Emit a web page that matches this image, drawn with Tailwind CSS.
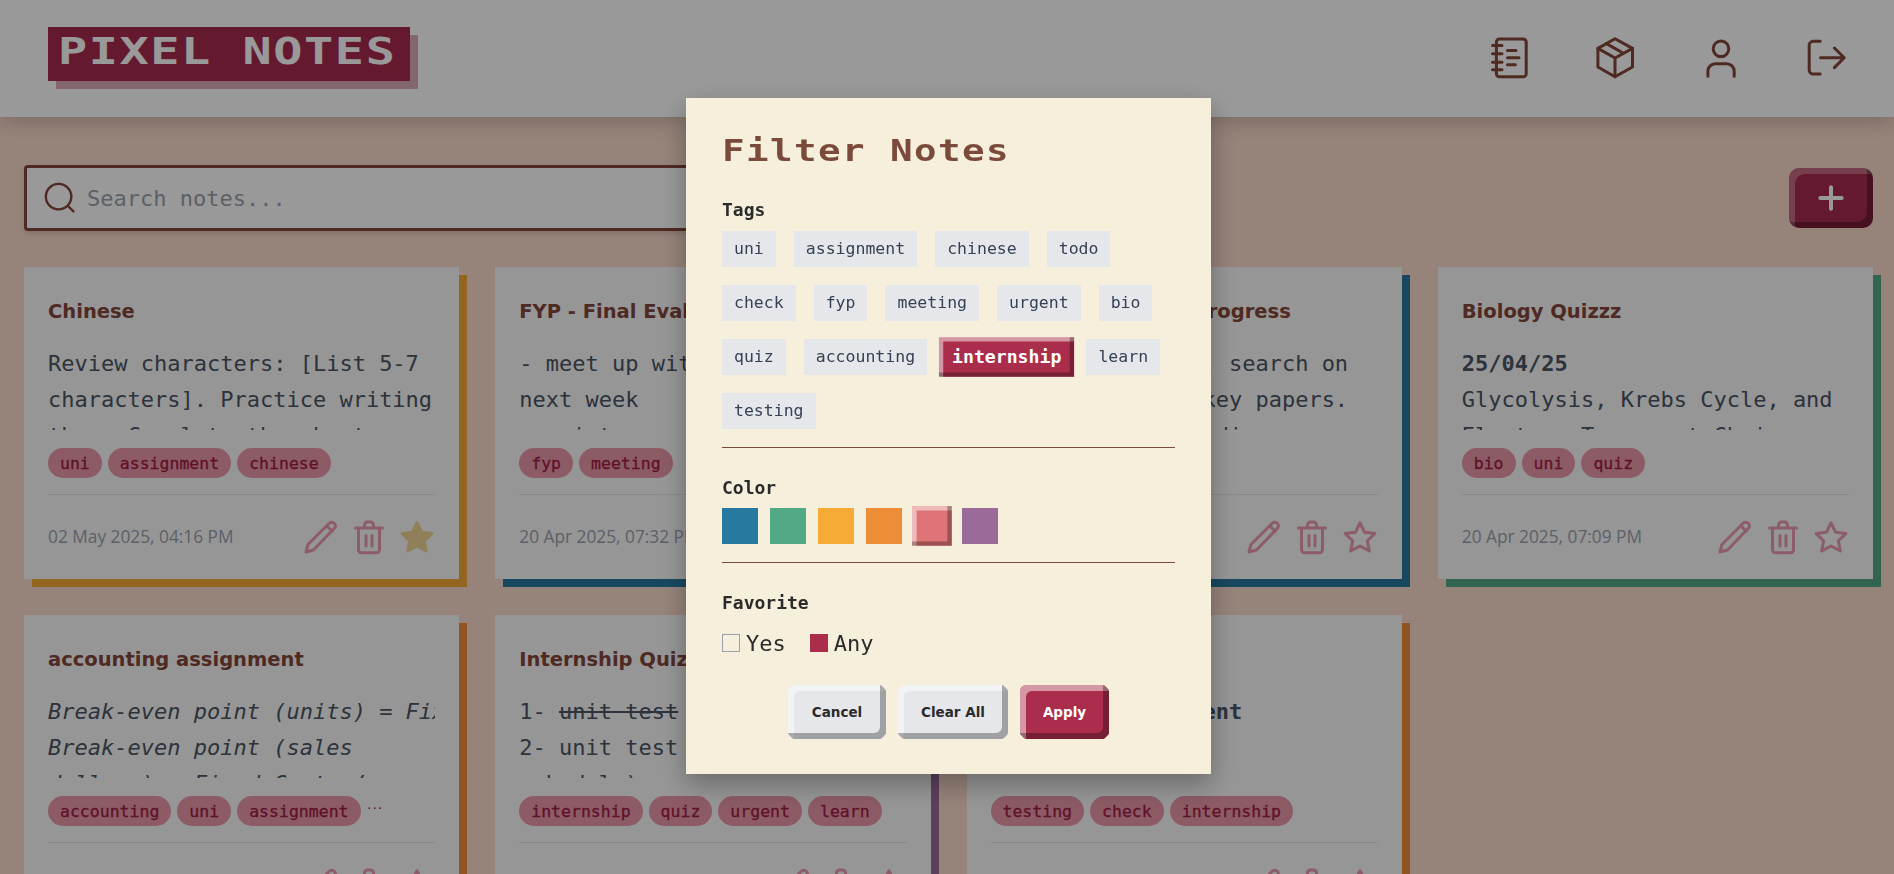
<!DOCTYPE html>
<html lang="en">
<head>
    <meta charset="UTF-8">
    <meta name="viewport" content="width=device-width, initial-scale=1.0">
    <title>Pixel Notes</title>
    <script src="https://cdn.jsdelivr.net/npm/@tailwindcss/browser@4"></script>
</head>
<body class="h-screen overflow-hidden bg-[#fadbcc] font-['DejaVu_Sans_Mono',monospace] text-gray-600">

    <!-- header -->
    <header class="h-[117px] bg-white flex items-start justify-between pt-[27px] pl-12 pr-[44px] shadow-[0_4px_20px_rgba(0,0,0,0.2)]">
        <h1 class="w-[362px] h-[54px] flex items-center pl-[10px] pb-[6px] bg-[#a92a4d] text-white font-bold text-[38px] tracking-[1.25px] whitespace-nowrap shadow-[8px_8px_0_rgba(169,42,77,0.4)]"><span class="inline-block origin-left scale-x-[1.275]">PIXEL NOTES</span></h1>
        <nav class="flex items-center gap-[57.5px] mt-[6.5px] text-[#84463a]">
            <svg class="w-12 h-12" viewBox="0 0 24 24" fill="none" stroke="currentColor" stroke-width="1.5" stroke-linecap="round" stroke-linejoin="round"><path d="M6.7 2.5H18.6a1.5 1.5 0 0 1 1.5 1.5V19.9a1.5 1.5 0 0 1-1.5 1.5H6.7a1.5 1.5 0 0 1-1.5-1.5V4a1.5 1.5 0 0 1 1.5-1.5z"/><path d="M3.25 5.75H8M3.25 9.9H8M3.25 14.1H8M3.25 17.9H8M10.75 8.25H15M10.75 11.9H16.5M10.75 15.4H14.7"/></svg>
            <svg class="w-12 h-12" viewBox="0 0 24 24" fill="none" stroke="currentColor" stroke-width="1.5" stroke-linecap="round" stroke-linejoin="round"><path d="M12 2.35L20.75 7.2V16.5L12 21.35L3.45 16.5V7.2z"/><path d="M3.45 7.2L12 12L20.75 7.2M12 12V21.35M7.7 4.8L16.2 9.6"/></svg>
            <svg class="w-12 h-12" viewBox="0 0 24 24" fill="none" stroke="currentColor" stroke-width="1.5" stroke-linecap="round" stroke-linejoin="round"><circle cx="12" cy="7.4" r="3.9"/><path d="M5.45 21.1v-2.5a3.75 3.75 0 0 1 3.75-3.75h5.65a3.75 3.75 0 0 1 3.75 3.75v2.5"/></svg>
            <svg class="w-12 h-12" viewBox="0 0 24 24" fill="none" stroke="currentColor" stroke-width="1.5" stroke-linecap="round" stroke-linejoin="round"><path d="M9.1 3.65H5.6a2 2 0 0 0-2 2v12.35a2 2 0 0 0 2 2h3.5M9.25 11.9H21.1M16.2 7l4.9 4.9-4.9 4.9"/></svg>
        </nav>
    </header>

    <main class="pl-6 pr-[21px]">
        <!-- search + add -->
        <div class="flex items-center justify-between h-[66px] mt-12">
            <div class="w-[1100px] h-[66px] flex items-center gap-[10px] pl-4 bg-white border-[3px] border-[#84463a] rounded-[4px] shadow-md">
                <svg class="w-[34px] h-[34px] shrink-0 text-[#84463a]" viewBox="0 0 24 24" fill="none" stroke="currentColor" stroke-width="1.7" stroke-linecap="round"><circle cx="11" cy="11" r="9"/><path d="M18 18l3.5 3.5"/></svg>
                <span class="text-[22px] text-gray-400">Search notes...</span>
            </div>
            <button class="w-[84px] h-[60px] flex items-center justify-center rounded-[10px] bg-[#a92a4d] text-white shadow-[inset_-6px_-6px_0_rgba(0,0,0,0.3),inset_6px_6px_0_rgba(255,255,255,0.3)]">
                <svg class="w-8 h-8" viewBox="0 0 24 24" fill="none" stroke="currentColor" stroke-width="3" stroke-linecap="round"><path d="M12 4v16M4 12h16"/></svg>
            </button>
        </div>

        <!-- notes -->
        <section class="grid grid-cols-4 gap-9 mt-9">

            <article class="h-[312px] bg-[#fafafa] p-6 flex flex-col shadow-[8px_8px_0_#f5ab35]">
                <h2 class="h-[42px] font-['DejaVu_Sans',sans-serif] font-bold text-[19.5px] leading-[42px] text-[#84463a]">Chinese</h2>
                <div class="h-[84px] mt-[13px] overflow-hidden text-[22px] leading-[36px]">Review characters: [List 5-7 characters]. Practice writing them. Complete the chapter review</div>
                <div class="flex items-center gap-[6px] mt-[18px]">
                    <span class="h-[30px] px-3 rounded-full bg-[#e998aa] text-[#a01c42] text-[16.5px] [-webkit-text-stroke:0.3px] leading-[31px]">uni</span>
                    <span class="h-[30px] px-3 rounded-full bg-[#e998aa] text-[#a01c42] text-[16.5px] [-webkit-text-stroke:0.3px] leading-[31px]">assignment</span>
                    <span class="h-[30px] px-3 rounded-full bg-[#e998aa] text-[#a01c42] text-[16.5px] [-webkit-text-stroke:0.3px] leading-[31px]">chinese</span>
                </div>
                <div class="flex items-center justify-between mt-4 pt-6 border-t border-gray-200">
                    <span class="font-['Open_Sans',sans-serif] text-[17.3px] text-gray-400">02 May 2025, 04:16 PM</span>
                    <div class="flex items-center gap-3 text-[#ea9cae]">
                        <svg class="w-9 h-9" viewBox="0 0 24 24" fill="none" stroke="currentColor" stroke-width="2" stroke-linecap="round" stroke-linejoin="round"><path d="M2 22l1.3-5L17.5 2.8a2.4 2.4 0 0 1 3.4 0a2.4 2.4 0 0 1 0 3.4L7 20.7z"/><path d="M15.8 4.5l3.7 3.7"/></svg>
                        <svg class="w-9 h-9" viewBox="0 0 24 24" fill="none" stroke="currentColor" stroke-width="2" stroke-linecap="round" stroke-linejoin="round"><path d="M3 6h18M9 6V4a2 2 0 0 1 2-2h2a2 2 0 0 1 2 2v2M5 6v14.5a2 2 0 0 0 2 2h10a2 2 0 0 0 2-2V6M10 11v7M14 11v7"/></svg>
                        <svg class="w-9 h-9 text-[#efd596]" viewBox="0 0 24 24" fill="currentColor" stroke="currentColor" stroke-width="2" stroke-linejoin="round"><path d="M12 2.5l3 6.3 6.9.9-5 4.8 1.3 6.8-6.2-3.3-6.2 3.3 1.3-6.8-5-4.8 6.9-.9z"/></svg>
                    </div>
                </div>
            </article>

            <article class="h-[312px] bg-[#fafafa] p-6 flex flex-col shadow-[8px_8px_0_#2779a0]">
                <h2 class="h-[42px] font-['DejaVu_Sans',sans-serif] font-bold text-[19.5px] leading-[42px] text-[#84463a]">FYP - Final Evaluation</h2>
                <div class="h-[84px] mt-[13px] overflow-hidden text-[22px] leading-[36px]">- meet up with supervisor<br>next week<br>- print report</div>
                <div class="flex items-center gap-[6px] mt-[18px]">
                    <span class="h-[30px] px-3 rounded-full bg-[#e998aa] text-[#a01c42] text-[16.5px] [-webkit-text-stroke:0.3px] leading-[31px]">fyp</span>
                    <span class="h-[30px] px-3 rounded-full bg-[#e998aa] text-[#a01c42] text-[16.5px] [-webkit-text-stroke:0.3px] leading-[31px]">meeting</span>
                </div>
                <div class="flex items-center justify-between mt-4 pt-6 border-t border-gray-200">
                    <span class="font-['Open_Sans',sans-serif] text-[17.3px] text-gray-400">20 Apr 2025, 07:32 PM</span>
                    <div class="flex items-center gap-3 text-[#ea9cae]">
                        <svg class="w-9 h-9" viewBox="0 0 24 24" fill="none" stroke="currentColor" stroke-width="2" stroke-linecap="round" stroke-linejoin="round"><path d="M2 22l1.3-5L17.5 2.8a2.4 2.4 0 0 1 3.4 0a2.4 2.4 0 0 1 0 3.4L7 20.7z"/><path d="M15.8 4.5l3.7 3.7"/></svg>
                        <svg class="w-9 h-9" viewBox="0 0 24 24" fill="none" stroke="currentColor" stroke-width="2" stroke-linecap="round" stroke-linejoin="round"><path d="M3 6h18M9 6V4a2 2 0 0 1 2-2h2a2 2 0 0 1 2 2v2M5 6v14.5a2 2 0 0 0 2 2h10a2 2 0 0 0 2-2V6M10 11v7M14 11v7"/></svg>
                        <svg class="w-9 h-9" viewBox="0 0 24 24" fill="none" stroke="currentColor" stroke-width="2" stroke-linejoin="round"><path d="M12 2.5l3 6.3 6.9.9-5 4.8 1.3 6.8-6.2-3.3-6.2 3.3 1.3-6.8-5-4.8 6.9-.9z"/></svg>
                    </div>
                </div>
            </article>

            <article class="h-[312px] bg-[#fafafa] p-6 flex flex-col shadow-[8px_8px_0_#2779a0]">
                <h2 class="h-[42px] font-['DejaVu_Sans',sans-serif] font-bold text-[19.5px] leading-[42px] whitespace-nowrap text-[#84463a]">Literature Review Progress</h2>
                <div class="h-[84px] mt-[13px] overflow-hidden text-[22px] leading-[36px]">Complete the lit. search on<br>Read and review key papers.<br>Note the main findings</div>
                <div class="flex items-center gap-[6px] mt-[18px]">
                    <span class="h-[30px] px-3 rounded-full bg-[#e998aa] text-[#a01c42] text-[16.5px] [-webkit-text-stroke:0.3px] leading-[31px]">fyp</span>
                    <span class="h-[30px] px-3 rounded-full bg-[#e998aa] text-[#a01c42] text-[16.5px] [-webkit-text-stroke:0.3px] leading-[31px]">meeting</span>
                </div>
                <div class="flex items-center justify-between mt-4 pt-6 border-t border-gray-200">
                    <span class="font-['Open_Sans',sans-serif] text-[17.3px] text-gray-400">20 Apr 2025, 07:20 PM</span>
                    <div class="flex items-center gap-3 text-[#ea9cae]">
                        <svg class="w-9 h-9" viewBox="0 0 24 24" fill="none" stroke="currentColor" stroke-width="2" stroke-linecap="round" stroke-linejoin="round"><path d="M2 22l1.3-5L17.5 2.8a2.4 2.4 0 0 1 3.4 0a2.4 2.4 0 0 1 0 3.4L7 20.7z"/><path d="M15.8 4.5l3.7 3.7"/></svg>
                        <svg class="w-9 h-9" viewBox="0 0 24 24" fill="none" stroke="currentColor" stroke-width="2" stroke-linecap="round" stroke-linejoin="round"><path d="M3 6h18M9 6V4a2 2 0 0 1 2-2h2a2 2 0 0 1 2 2v2M5 6v14.5a2 2 0 0 0 2 2h10a2 2 0 0 0 2-2V6M10 11v7M14 11v7"/></svg>
                        <svg class="w-9 h-9" viewBox="0 0 24 24" fill="none" stroke="currentColor" stroke-width="2" stroke-linejoin="round"><path d="M12 2.5l3 6.3 6.9.9-5 4.8 1.3 6.8-6.2-3.3-6.2 3.3 1.3-6.8-5-4.8 6.9-.9z"/></svg>
                    </div>
                </div>
            </article>

            <article class="h-[312px] bg-[#fafafa] p-6 flex flex-col shadow-[8px_8px_0_#52a985]">
                <h2 class="h-[42px] font-['DejaVu_Sans',sans-serif] font-bold text-[19.5px] leading-[42px] text-[#84463a]">Biology Quizzz</h2>
                <div class="h-[84px] mt-[13px] overflow-hidden text-[22px] leading-[36px]"><b>25/04/25</b><br>Glycolysis, Krebs Cycle, and Electron Transport Chain</div>
                <div class="flex items-center gap-[6px] mt-[18px]">
                    <span class="h-[30px] px-3 rounded-full bg-[#e998aa] text-[#a01c42] text-[16.5px] [-webkit-text-stroke:0.3px] leading-[31px]">bio</span>
                    <span class="h-[30px] px-3 rounded-full bg-[#e998aa] text-[#a01c42] text-[16.5px] [-webkit-text-stroke:0.3px] leading-[31px]">uni</span>
                    <span class="h-[30px] px-3 rounded-full bg-[#e998aa] text-[#a01c42] text-[16.5px] [-webkit-text-stroke:0.3px] leading-[31px]">quiz</span>
                </div>
                <div class="flex items-center justify-between mt-4 pt-6 border-t border-gray-200">
                    <span class="font-['Open_Sans',sans-serif] text-[17.3px] text-gray-400">20 Apr 2025, 07:09 PM</span>
                    <div class="flex items-center gap-3 text-[#ea9cae]">
                        <svg class="w-9 h-9" viewBox="0 0 24 24" fill="none" stroke="currentColor" stroke-width="2" stroke-linecap="round" stroke-linejoin="round"><path d="M2 22l1.3-5L17.5 2.8a2.4 2.4 0 0 1 3.4 0a2.4 2.4 0 0 1 0 3.4L7 20.7z"/><path d="M15.8 4.5l3.7 3.7"/></svg>
                        <svg class="w-9 h-9" viewBox="0 0 24 24" fill="none" stroke="currentColor" stroke-width="2" stroke-linecap="round" stroke-linejoin="round"><path d="M3 6h18M9 6V4a2 2 0 0 1 2-2h2a2 2 0 0 1 2 2v2M5 6v14.5a2 2 0 0 0 2 2h10a2 2 0 0 0 2-2V6M10 11v7M14 11v7"/></svg>
                        <svg class="w-9 h-9" viewBox="0 0 24 24" fill="none" stroke="currentColor" stroke-width="2" stroke-linejoin="round"><path d="M12 2.5l3 6.3 6.9.9-5 4.8 1.3 6.8-6.2-3.3-6.2 3.3 1.3-6.8-5-4.8 6.9-.9z"/></svg>
                    </div>
                </div>
            </article>

            <article class="h-[312px] bg-[#fafafa] p-6 flex flex-col shadow-[8px_8px_0_#ee8d38]">
                <h2 class="h-[42px] font-['DejaVu_Sans',sans-serif] font-bold text-[19.5px] leading-[42px] text-[#84463a]">accounting assignment</h2>
                <div class="h-[84px] mt-[13px] overflow-hidden text-[22px] leading-[36px] italic"><div class="whitespace-nowrap">Break-even point (units) = Fixed</div>Break-even point (sales dollars) = Fixed Costs / ratio</div>
                <div class="flex items-center gap-[6px] mt-[18px]">
                    <span class="h-[30px] px-3 rounded-full bg-[#e998aa] text-[#a01c42] text-[16.5px] [-webkit-text-stroke:0.3px] leading-[31px]">accounting</span>
                    <span class="h-[30px] px-3 rounded-full bg-[#e998aa] text-[#a01c42] text-[16.5px] [-webkit-text-stroke:0.3px] leading-[31px]">uni</span>
                    <span class="h-[30px] px-3 rounded-full bg-[#e998aa] text-[#a01c42] text-[16.5px] [-webkit-text-stroke:0.3px] leading-[31px]">assignment</span>
                    <span class="self-start text-[#a01c42] text-[9px] font-bold leading-[20px]">...</span>
                </div>
                <div class="flex items-center justify-between mt-4 pt-6 border-t border-gray-200">
                    <span class="font-['Open_Sans',sans-serif] text-[17.3px] text-gray-400">20 Apr 2025, 07:01 PM</span>
                    <div class="flex items-center gap-3 text-[#ea9cae]">
                        <svg class="w-9 h-9" viewBox="0 0 24 24" fill="none" stroke="currentColor" stroke-width="2" stroke-linecap="round" stroke-linejoin="round"><path d="M2 22l1.3-5L17.5 2.8a2.4 2.4 0 0 1 3.4 0a2.4 2.4 0 0 1 0 3.4L7 20.7z"/><path d="M15.8 4.5l3.7 3.7"/></svg>
                        <svg class="w-9 h-9" viewBox="0 0 24 24" fill="none" stroke="currentColor" stroke-width="2" stroke-linecap="round" stroke-linejoin="round"><path d="M3 6h18M9 6V4a2 2 0 0 1 2-2h2a2 2 0 0 1 2 2v2M5 6v14.5a2 2 0 0 0 2 2h10a2 2 0 0 0 2-2V6M10 11v7M14 11v7"/></svg>
                        <svg class="w-9 h-9" viewBox="0 0 24 24" fill="none" stroke="currentColor" stroke-width="2" stroke-linejoin="round"><path d="M12 2.5l3 6.3 6.9.9-5 4.8 1.3 6.8-6.2-3.3-6.2 3.3 1.3-6.8-5-4.8 6.9-.9z"/></svg>
                    </div>
                </div>
            </article>

            <article class="h-[312px] bg-[#fafafa] p-6 flex flex-col shadow-[8px_8px_0_#9a6a99]">
                <h2 class="h-[42px] font-['DejaVu_Sans',sans-serif] font-bold text-[19.5px] leading-[42px] text-[#84463a]">Internship Quiz</h2>
                <div class="h-[84px] mt-[13px] overflow-hidden text-[22px] leading-[36px]">1- <s>unit test</s> on Monday<br>2- unit test on Friday<br>schedule)</div>
                <div class="flex items-center gap-[6px] mt-[18px]">
                    <span class="h-[30px] px-3 rounded-full bg-[#e998aa] text-[#a01c42] text-[16.5px] [-webkit-text-stroke:0.3px] leading-[31px]">internship</span>
                    <span class="h-[30px] px-3 rounded-full bg-[#e998aa] text-[#a01c42] text-[16.5px] [-webkit-text-stroke:0.3px] leading-[31px]">quiz</span>
                    <span class="h-[30px] px-3 rounded-full bg-[#e998aa] text-[#a01c42] text-[16.5px] [-webkit-text-stroke:0.3px] leading-[31px]">urgent</span>
                    <span class="h-[30px] px-3 rounded-full bg-[#e998aa] text-[#a01c42] text-[16.5px] [-webkit-text-stroke:0.3px] leading-[31px]">learn</span>
                </div>
                <div class="flex items-center justify-between mt-4 pt-6 border-t border-gray-200">
                    <span class="font-['Open_Sans',sans-serif] text-[17.3px] text-gray-400">20 Apr 2025, 06:50 PM</span>
                    <div class="flex items-center gap-3 text-[#ea9cae]">
                        <svg class="w-9 h-9" viewBox="0 0 24 24" fill="none" stroke="currentColor" stroke-width="2" stroke-linecap="round" stroke-linejoin="round"><path d="M2 22l1.3-5L17.5 2.8a2.4 2.4 0 0 1 3.4 0a2.4 2.4 0 0 1 0 3.4L7 20.7z"/><path d="M15.8 4.5l3.7 3.7"/></svg>
                        <svg class="w-9 h-9" viewBox="0 0 24 24" fill="none" stroke="currentColor" stroke-width="2" stroke-linecap="round" stroke-linejoin="round"><path d="M3 6h18M9 6V4a2 2 0 0 1 2-2h2a2 2 0 0 1 2 2v2M5 6v14.5a2 2 0 0 0 2 2h10a2 2 0 0 0 2-2V6M10 11v7M14 11v7"/></svg>
                        <svg class="w-9 h-9" viewBox="0 0 24 24" fill="none" stroke="currentColor" stroke-width="2" stroke-linejoin="round"><path d="M12 2.5l3 6.3 6.9.9-5 4.8 1.3 6.8-6.2-3.3-6.2 3.3 1.3-6.8-5-4.8 6.9-.9z"/></svg>
                    </div>
                </div>
            </article>

            <article class="h-[312px] bg-[#fafafa] p-6 flex flex-col shadow-[8px_8px_0_#ee8d38]">
                <h2 class="h-[42px] font-['DejaVu_Sans',sans-serif] font-bold text-[19.5px] leading-[42px] text-[#84463a]">testing</h2>
                <div class="h-[84px] mt-[13px] overflow-hidden text-[22px] leading-[36px]"><b>testing the element</b><br>second line</div>
                <div class="flex items-center gap-[6px] mt-[18px]">
                    <span class="h-[30px] px-3 rounded-full bg-[#e998aa] text-[#a01c42] text-[16.5px] [-webkit-text-stroke:0.3px] leading-[31px]">testing</span>
                    <span class="h-[30px] px-3 rounded-full bg-[#e998aa] text-[#a01c42] text-[16.5px] [-webkit-text-stroke:0.3px] leading-[31px]">check</span>
                    <span class="h-[30px] px-3 rounded-full bg-[#e998aa] text-[#a01c42] text-[16.5px] [-webkit-text-stroke:0.3px] leading-[31px]">internship</span>
                </div>
                <div class="flex items-center justify-between mt-4 pt-6 border-t border-gray-200">
                    <span class="font-['Open_Sans',sans-serif] text-[17.3px] text-gray-400">20 Apr 2025, 06:41 PM</span>
                    <div class="flex items-center gap-3 text-[#ea9cae]">
                        <svg class="w-9 h-9" viewBox="0 0 24 24" fill="none" stroke="currentColor" stroke-width="2" stroke-linecap="round" stroke-linejoin="round"><path d="M2 22l1.3-5L17.5 2.8a2.4 2.4 0 0 1 3.4 0a2.4 2.4 0 0 1 0 3.4L7 20.7z"/><path d="M15.8 4.5l3.7 3.7"/></svg>
                        <svg class="w-9 h-9" viewBox="0 0 24 24" fill="none" stroke="currentColor" stroke-width="2" stroke-linecap="round" stroke-linejoin="round"><path d="M3 6h18M9 6V4a2 2 0 0 1 2-2h2a2 2 0 0 1 2 2v2M5 6v14.5a2 2 0 0 0 2 2h10a2 2 0 0 0 2-2V6M10 11v7M14 11v7"/></svg>
                        <svg class="w-9 h-9" viewBox="0 0 24 24" fill="none" stroke="currentColor" stroke-width="2" stroke-linejoin="round"><path d="M12 2.5l3 6.3 6.9.9-5 4.8 1.3 6.8-6.2-3.3-6.2 3.3 1.3-6.8-5-4.8 6.9-.9z"/></svg>
                    </div>
                </div>
            </article>
        </section>
    </main>

    <!-- filter modal -->
    <div class="fixed inset-0 bg-black/40"></div>
    <div class="fixed left-[686px] top-[98px] w-[525px] h-[676px] bg-[#f5efdc] px-9 pt-9 shadow-[0_10px_25px_rgba(0,0,0,0.3)] text-[#2b2b2b]">
        <h3 class="h-[32px] flex items-center font-bold text-[30px] tracking-[1.14px] whitespace-nowrap text-[#7b4a3a]"><span class="inline-block origin-left scale-x-[1.25]">Filter Notes</span></h3>
        <div class="h-[27px] mt-[30px] mb-2 font-bold text-[18px] leading-[27px]">Tags</div>
        <div class="flex flex-wrap gap-[18px] pb-[18px] border-b border-[#7b4a3a] text-[16.5px] leading-[36px] text-gray-700">
            <span class="h-9 px-3 bg-gray-200">uni</span>
            <span class="h-9 px-3 bg-gray-200">assignment</span>
            <span class="h-9 px-3 bg-gray-200">chinese</span>
            <span class="h-9 px-3 bg-gray-200">todo</span>
            <span class="h-9 px-3 bg-gray-200">check</span>
            <span class="h-9 px-3 bg-gray-200">fyp</span>
            <span class="h-9 px-3 bg-gray-200">meeting</span>
            <span class="h-9 px-3 bg-gray-200">urgent</span>
            <span class="h-9 px-3 bg-gray-200">bio</span>
            <span class="h-9 px-3 bg-gray-200">quiz</span>
            <span class="h-9 px-3 bg-gray-200">accounting</span>
            <span class="h-9 px-3 bg-[#ab2d4c] text-white font-bold scale-110 shadow-[inset_-4px_-4px_0_rgba(0,0,0,0.3),inset_4px_4px_0_rgba(255,255,255,0.5)]">internship</span>
            <span class="h-9 px-3 bg-gray-200">learn</span>
            <span class="h-9 px-3 bg-gray-200">testing</span>
        </div>
        <div class="h-[27px] mt-[26px] mb-[7px] font-bold text-[18px] leading-[27px]">Color</div>
        <div class="flex gap-3 pb-[18px] border-b border-[#7b4a3a]">
            <span class="w-9 h-9 bg-[#2779a0]"></span>
            <span class="w-9 h-9 bg-[#52a985]"></span>
            <span class="w-9 h-9 bg-[#f5ab35]"></span>
            <span class="w-9 h-9 bg-[#ee8d38]"></span>
            <span class="w-9 h-9 bg-[#de7475] scale-110 shadow-[inset_-4px_-4px_0_rgba(0,0,0,0.3),inset_4px_4px_0_rgba(255,255,255,0.5)]"></span>
            <span class="w-9 h-9 bg-[#9a6a99]"></span>
        </div>
        <div class="h-[27px] mt-[26px] mb-[9px] font-bold text-[18px] leading-[27px]">Favorite</div>
        <div class="flex items-center h-9 text-[22px]">
            <span class="w-[18px] h-[18px] border border-gray-400"></span>
            <span class="ml-[6px] mr-6">Yes</span>
            <span class="w-[18px] h-[18px] bg-[#ab2d4c]"></span>
            <span class="ml-[6px]">Any</span>
        </div>
        <div class="flex justify-center gap-3 mt-6 font-['DejaVu_Sans',sans-serif] font-bold text-[13.5px]">
            <button class="w-[98px] h-[54px] rounded-[6px] bg-gray-200 text-[#2b2b2b] shadow-[inset_-6px_-6px_0_rgba(0,0,0,0.3),inset_6px_6px_0_rgba(255,255,255,0.5)] [clip-path:polygon(0_0,calc(100%-5px)_0,100%_5px,100%_calc(100%-5px),calc(100%-5px)_100%,5px_100%,0_calc(100%-5px))]">Cancel</button>
            <button class="w-[110px] h-[54px] rounded-[6px] bg-gray-200 text-[#2b2b2b] shadow-[inset_-6px_-6px_0_rgba(0,0,0,0.3),inset_6px_6px_0_rgba(255,255,255,0.5)] [clip-path:polygon(0_0,calc(100%-5px)_0,100%_5px,100%_calc(100%-5px),calc(100%-5px)_100%,5px_100%,0_calc(100%-5px))]">Clear All</button>
            <button class="w-[89px] h-[54px] rounded-[6px] bg-[#ab2d4c] text-white shadow-[inset_-6px_-6px_0_rgba(0,0,0,0.3),inset_6px_6px_0_rgba(255,255,255,0.5)] [clip-path:polygon(0_0,calc(100%-5px)_0,100%_5px,100%_calc(100%-5px),calc(100%-5px)_100%,5px_100%,0_calc(100%-5px))]">Apply</button>
        </div>
    </div>
</body>
</html>
